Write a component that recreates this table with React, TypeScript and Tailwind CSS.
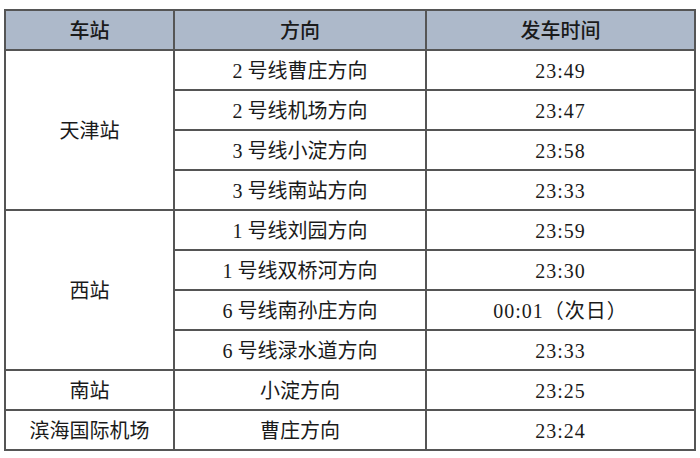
const groups = [
  {
    station: "天津站",
    rows: [
      ["2 号线曹庄方向", "23:49"],
      ["2 号线机场方向", "23:47"],
      ["3 号线小淀方向", "23:58"],
      ["3 号线南站方向", "23:33"],
    ],
  },
  {
    station: "西站",
    rows: [
      ["1 号线刘园方向", "23:59"],
      ["1 号线双桥河方向", "23:30"],
      ["6 号线南孙庄方向", "00:01（次日）"],
      ["6 号线渌水道方向", "23:33"],
    ],
  },
  { station: "南站", rows: [["小淀方向", "23:25"]] },
  { station: "滨海国际机场", rows: [["曹庄方向", "23:24"]] },
];

const cell = "border-2 border-[#555] text-center align-middle px-0 pt-[2px] pb-0 h-[40px]";

export default function App() {
  return (
    <div className="w-[700px] h-[458px] bg-white pt-[9px] pl-[4px]">
      <table
        className="border-collapse table-fixed w-[690px] text-[20px] text-[#1a1a1a]"
        style={{ fontFamily: '"Liberation Serif", "Noto Sans CJK SC", serif' }}
      >
        <colgroup>
          <col className="w-[169px]" />
          <col className="w-[252px]" />
          <col className="w-[269px]" />
        </colgroup>
        <thead>
          <tr className="bg-[#adb9ca]">
            <th className={cell + " font-medium"}>车站</th>
            <th className={cell + " font-medium"}>方向</th>
            <th className={cell + " font-medium"}>发车时间</th>
          </tr>
        </thead>
        <tbody>
          {groups.map((g) =>
            g.rows.map((r, i) => (
              <tr key={g.station + i}>
                {i === 0 && (
                  <td className={cell + " h-[40.2px]"} rowSpan={g.rows.length}>
                    {g.station}
                  </td>
                )}
                <td className={cell + " h-[40.2px]"}>{r[0]}</td>
                <td className={cell + " h-[40.2px] tracking-[1px]"}>{r[1]}</td>
              </tr>
            ))
          )}
        </tbody>
      </table>
    </div>
  );
}
